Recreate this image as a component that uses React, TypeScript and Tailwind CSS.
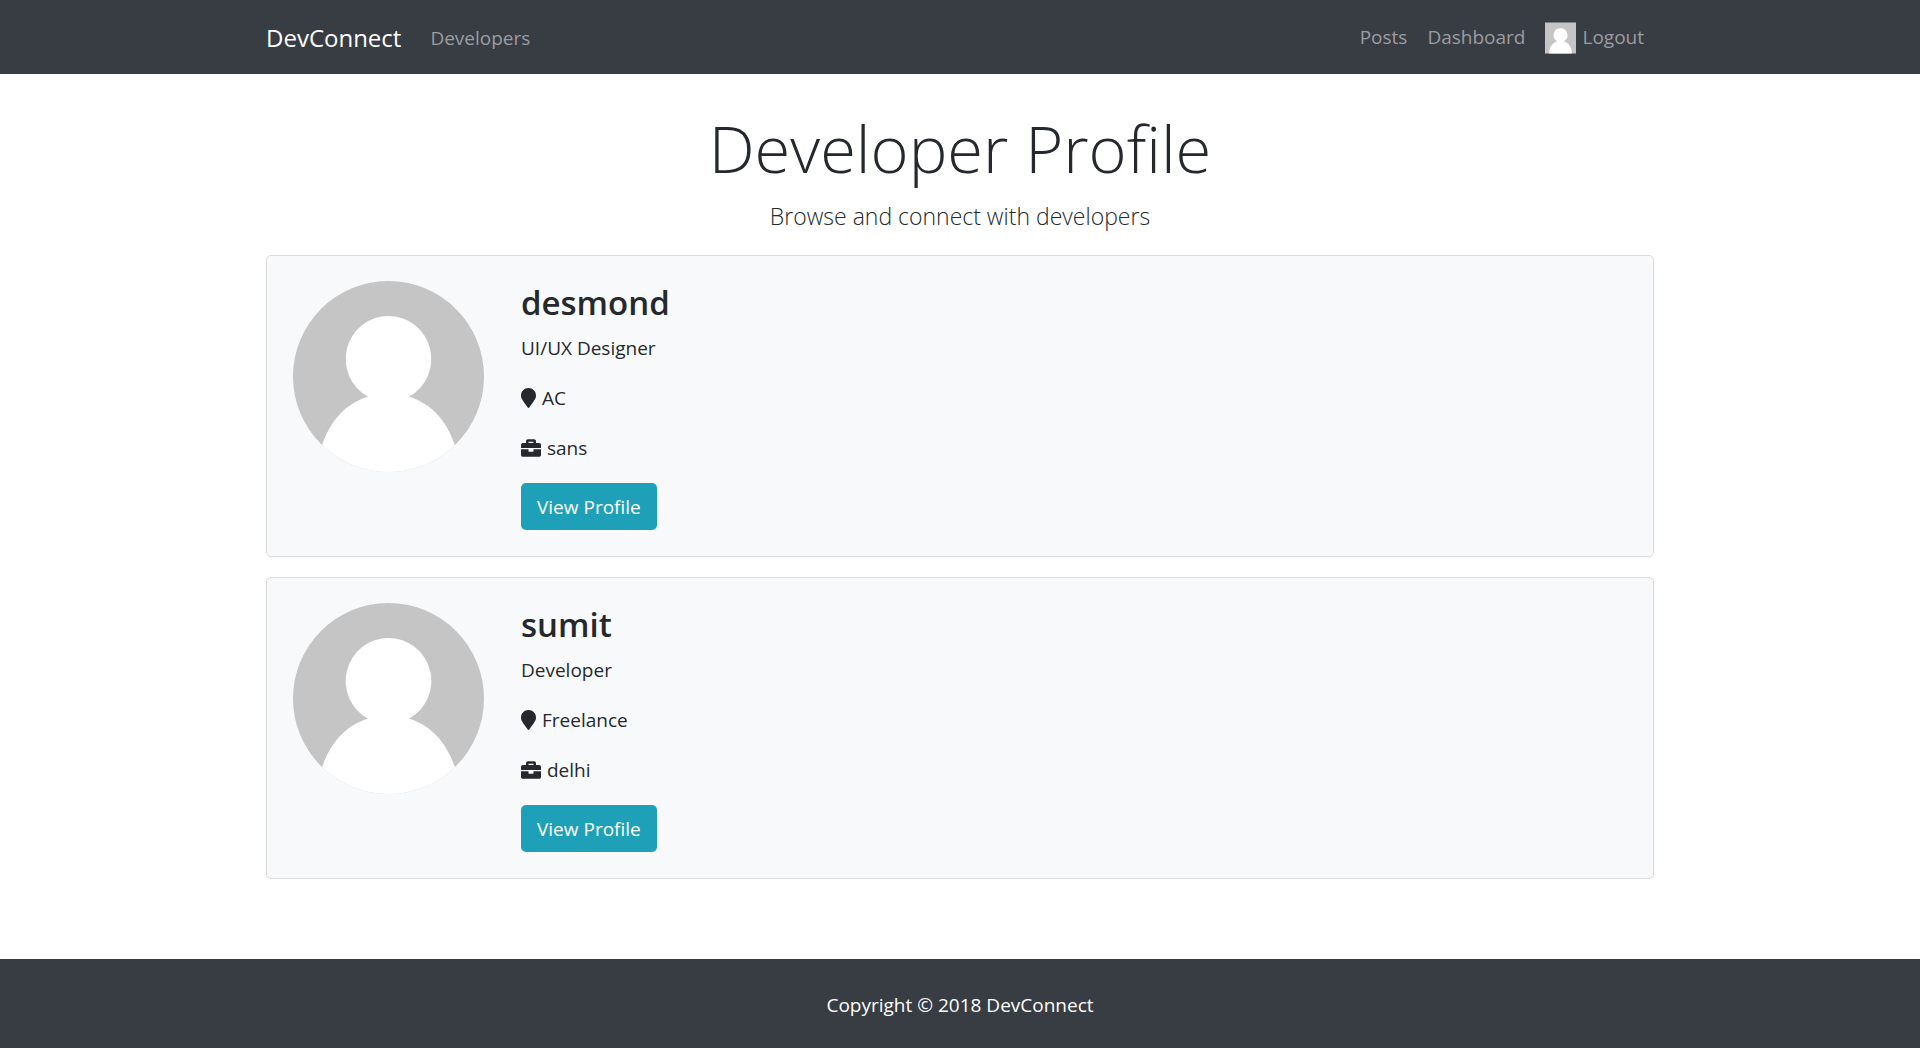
import { FaBriefcase, FaMapMarker } from "react-icons/fa";

type Developer = {
  name: string;
  status: string;
  company: string;
  location: string;
};

const developers: Developer[] = [
  { name: "desmond", status: "UI/UX Designer", company: "AC", location: "sans" },
  { name: "sumit", status: "Developer", company: "Freelance", location: "delhi" },
];

function Avatar({ className }: { className: string }) {
  return (
    <svg viewBox="0 0 191 191" className={className} aria-hidden="true">
      <rect width="191" height="191" fill="#c5c5c5" />
      <path
        d="M95.5 35a43 43 0 0 1 20.5 80.7C138 122 157 141 165 175V191H26V175C34 141 53 122 75 115.7A43 43 0 0 1 95.5 35Z"
        fill="#fff"
      />
    </svg>
  );
}

function Navbar() {
  return (
    <nav className="bg-[#383c43]">
      <div className="mx-auto flex h-[74px] max-w-[1426px] items-center justify-between px-[19px] pt-0.5">
        <div className="flex items-center gap-[29px]">
          <a href="#" className="text-[24px] leading-[38px] text-white">
            DevConnect
          </a>
          <a href="#developers" className="text-[19px] leading-[30px] text-[#9b9da1]">
            Developers
          </a>
        </div>
        <div className="flex items-start gap-5 pr-2.5 text-[19px] leading-[30px] text-[#9b9da1]">
          <a href="#posts">Posts</a>
          <a href="#dashboard">Dashboard</a>
          <a href="#logout" className="flex items-start gap-1.5">
            <Avatar className="h-8 w-[31px]" />
            Logout
          </a>
        </div>
      </div>
    </nav>
  );
}

function ProfileCard({ dev }: { dev: Developer }) {
  return (
    <article className="mb-5 flex gap-[37px] rounded-[5px] border border-[#d9dbdd] bg-[#f8f9fb] px-[26px] pt-[25px] pb-[26px]">
      <Avatar className="size-[191px] shrink-0 rounded-full" />
      <div>
        <h3 className="mb-2 text-[33px] leading-[44px] font-semibold">{dev.name}</h3>
        <p className="mb-5">{dev.status}</p>
        <p className="mb-5 flex items-center gap-1.5">
          <FaMapMarker className="h-5 w-[15px]" />
          {dev.company}
        </p>
        <p className="mb-5 flex items-center gap-1.5">
          <FaBriefcase className="size-5" />
          {dev.location}
        </p>
        <button type="button" className="h-[47px] rounded-[5px] bg-[#1ea1b8] px-4 text-white">
          View Profile
        </button>
      </div>
    </article>
  );
}

export default function App() {
  return (
    <div className="flex min-h-screen flex-col bg-white font-['Open_Sans',sans-serif] text-[19px] leading-[30px] text-[#25292d]">
      <Navbar />
      <main className="mx-auto w-full max-w-[1426px] flex-1 px-[19px] pt-8 pb-[60px]">
        <h1 className="mb-2 text-center text-[65px] leading-[84px] font-light">Developer Profile</h1>
        <p className="mb-5 text-center text-[23px] leading-[37px] font-light">
          Browse and connect with developers
        </p>
        {developers.map((dev) => (
          <ProfileCard key={dev.name} dev={dev} />
        ))}
      </main>
      <footer className="bg-[#383c43] pt-[31px] pb-7 text-center leading-[30px] text-white">
        Copyright © 2018 DevConnect
      </footer>
    </div>
  );
}
